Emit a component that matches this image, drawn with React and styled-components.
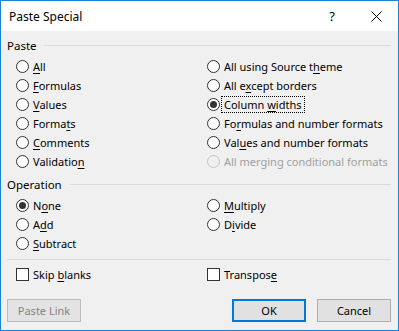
import React from "react";
import styled, { createGlobalStyle } from "styled-components";

const GlobalStyle = createGlobalStyle`
  html, body {
    margin: 0;
    padding: 0;
    background: #ffffff;
  }
  body {
    font-family: "Noto Sans", "Open Sans", sans-serif;
    font-size: 11px;
    color: #000;
  }
`;

const Dialog = styled.div`
  width: 399px;
  height: 331px;
  box-sizing: border-box;
  border: 1px solid #1883d7;
  background: #f0f0f0;
  display: flex;
  flex-direction: column;
`;

const TitleBar = styled.div`
  height: 30px;
  background: #ffffff;
  display: flex;
  align-items: center;
  padding-left: 8px;
  font-size: 12px;
`;

const Title = styled.div`
  flex: 1;
`;

const TitleButton = styled.div`
  width: 44px;
  height: 30px;
  display: flex;
  align-items: center;
  justify-content: center;
  font-size: 13px;
`;

const Body = styled.div`
  flex: 1;
  padding: 0 7px 0 6px;
  display: flex;
  flex-direction: column;
`;

const GroupHeader = styled.div`
  display: flex;
  align-items: center;
  height: 18px;
  margin-top: ${(p) => p.$top}px;
  gap: 7px;
  font-size: 11.5px;
`;

const Rule = styled.div`
  flex: 1;
  height: 1px;
  background: #dcdcdc;
`;

const Options = styled.div`
  display: grid;
  grid-template-columns: 191px 1fr;
  grid-auto-flow: column;
  grid-template-rows: repeat(${(p) => p.$rows}, 19px);
  margin: 3px 0 0 9px;
`;

const Option = styled.label`
  display: flex;
  align-items: center;
  gap: 4px;
  color: ${(p) => (p.$disabled ? "#a0a0a0" : "#000")};
  white-space: nowrap;
`;

const Radio = styled.span`
  width: 13px;
  height: 13px;
  box-sizing: border-box;
  border-radius: 50%;
  border: 1px solid ${(p) => (p.$disabled ? "#c4c4c4" : "#333333")};
  background: ${(p) => (p.$disabled ? "#f0f0f0" : "#ffffff")};
  display: flex;
  align-items: center;
  justify-content: center;
  flex-shrink: 0;

  &::after {
    content: "";
    display: ${(p) => (p.$checked ? "block" : "none")};
    width: 7px;
    height: 7px;
    border-radius: 50%;
    background: #333333;
  }
`;

const Check = styled.span`
  width: 13px;
  height: 13px;
  box-sizing: border-box;
  border: 1px solid #333333;
  background: #ffffff;
  flex-shrink: 0;
`;

const Focus = styled.span`
  outline: 1px dotted #000;
  outline-offset: 0;
  padding: 0 2px;
  margin-left: -2px;
  line-height: 15px;
`;

const Key = styled.u`
  text-decoration-thickness: 1px;
  text-underline-offset: 2px;
`;

const Separator = styled.div`
  height: 1px;
  background: #dcdcdc;
  margin-top: 6px;
`;

const CheckRow = styled.div`
  display: grid;
  grid-template-columns: 191px 1fr;
  height: 19px;
  margin: 5px 0 0 9px;
`;

const ButtonRow = styled.div`
  display: flex;
  margin-top: 15px;
  gap: 11px;
`;

const Button = styled.div`
  width: 74px;
  height: 23px;
  box-sizing: border-box;
  display: flex;
  align-items: center;
  justify-content: center;
  background: ${(p) => (p.$disabled ? "#e3e3e3" : "#e1e1e1")};
  border: ${(p) =>
    p.$primary ? "2px solid #0078d7" : p.$disabled ? "1px solid #bcbcbc" : "1px solid #adadad"};
  color: ${(p) => (p.$disabled ? "#838383" : "#000")};
  margin-right: ${(p) => (p.$push ? "auto" : "0")};
`;

const label = (text, key) => {
  if (key == null) return text;
  return (
    <>
      {text.slice(0, key)}
      <Key>{text[key]}</Key>
      {text.slice(key + 1)}
    </>
  );
};

const pasteOptions = [
  ["All", 0],
  ["Formulas", 0],
  ["Values", 0],
  ["Formats", 5],
  ["Comments", 0],
  ["Validation", 9],
  ["All using Source theme", 18],
  ["All except borders", 5],
  ["Column widths", 7, "checked", "focus"],
  ["Formulas and number formats", 2],
  ["Values and number formats", 3],
  ["All merging conditional formats", null, null, null, "disabled"],
];

const operationOptions = [
  ["None", 1, "checked"],
  ["Add", 1],
  ["Subtract", 0],
  ["Multiply", 0],
  ["Divide", 1],
  null,
];

const OptionItem = ({ opt }) => {
  if (!opt) return <span />;
  const [text, key, checked, focus, disabled] = opt;
  const content = label(text, key);
  return (
    <Option $disabled={!!disabled}>
      <Radio $checked={!!checked} $disabled={!!disabled} />
      {focus ? <Focus>{content}</Focus> : <span>{content}</span>}
    </Option>
  );
};

const App = () => (
  <>
    <GlobalStyle />
    <Dialog>
      <TitleBar>
        <Title>Paste Special</Title>
        <TitleButton>?</TitleButton>
        <TitleButton>
          <svg width="11" height="11" viewBox="0 0 11 11">
            <path d="M0.5 0.5 L10.5 10.5 M10.5 0.5 L0.5 10.5" stroke="#000" strokeWidth="1" />
          </svg>
        </TitleButton>
      </TitleBar>
      <Body>
        <GroupHeader $top={5}>
          <span>Paste</span>
          <Rule />
        </GroupHeader>
        <Options $rows={6}>
          {pasteOptions.map((o, i) => (
            <OptionItem key={i} opt={o} />
          ))}
        </Options>
        <GroupHeader $top={4}>
          <span>Operation</span>
          <Rule />
        </GroupHeader>
        <Options $rows={3}>
          {operationOptions.map((o, i) => (
            <OptionItem key={i} opt={o} />
          ))}
        </Options>
        <Separator />
        <CheckRow>
          <Option>
            <Check />
            <span>{label("Skip blanks", 5)}</span>
          </Option>
          <Option>
            <Check />
            <span>{label("Transpose", 8)}</span>
          </Option>
        </CheckRow>
        <ButtonRow>
          <Button $disabled $push>
            Paste Link
          </Button>
          <Button $primary>OK</Button>
          <Button>Cancel</Button>
        </ButtonRow>
      </Body>
    </Dialog>
  </>
);

export default App;
